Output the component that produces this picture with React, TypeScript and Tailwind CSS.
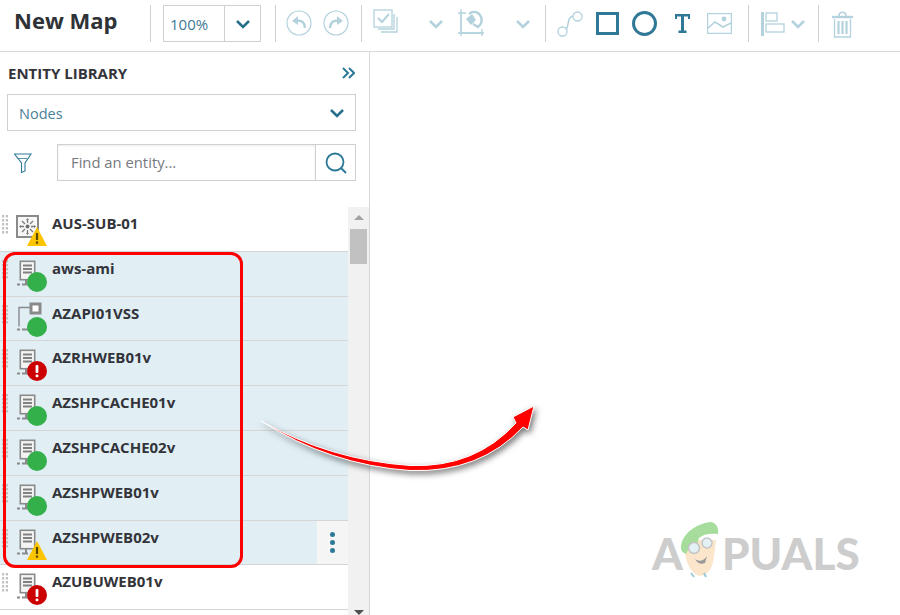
const LIGHT = "#b3d2dd";
const DARK = "#2c7a98";

function Chevron({ color = "#26708c", size = 16 }: { color?: string; size?: number }) {
  return (
    <svg width={size} height={size} viewBox="0 0 16 16" fill="none" stroke={color} strokeWidth="2.6">
      <path d="M2 5l6 6 6-6" />
    </svg>
  );
}

function Divider({ ml }: { ml: string }) {
  return <div className={`h-[37px] w-px shrink-0 bg-[#d0d0d0] ${ml}`} />;
}

function Toolbar() {
  return (
    <div className="flex h-[52px] shrink-0 items-start border-b border-[#d8d8d8] pt-[5px]">
      <div className="ml-[14px] w-[136px] shrink-0 text-[22px] leading-[30px] font-bold text-[#2f3237]">New Map</div>
      <Divider ml="" />
      <div className="ml-[12px] flex h-[37px] w-[98px] shrink-0 border border-[#d0d0d0]">
        <div className="flex w-[61px] items-center border-r border-[#d0d0d0] pl-[6px] pt-[2px] text-[15px] text-[#3f7a94]">100%</div>
        <div className="flex flex-1 items-center justify-center"><Chevron /></div>
      </div>
      <Divider ml="ml-[14px]" />
      {/* undo / redo */}
      <svg className="ml-[10px] mt-[5px] shrink-0" width="26" height="26" viewBox="0 0 26 26" fill="none" stroke={LIGHT}>
        <circle cx="13" cy="13" r="12" strokeWidth="1.2" />
        <path d="M19 18c0-5-3-8-8-7" strokeWidth="2.4" />
        <path d="M6 11l6-5v9z" fill={LIGHT} stroke="none" />
      </svg>
      <svg className="ml-[11px] mt-[5px] shrink-0" width="26" height="26" viewBox="0 0 26 26" fill="none" stroke={LIGHT}>
        <circle cx="13" cy="13" r="12" strokeWidth="1.2" />
        <path d="M7 18c0-5 3-8 8-7" strokeWidth="2.4" />
        <path d="M20 11l-6-5v9z" fill={LIGHT} stroke="none" />
      </svg>
      <Divider ml="ml-[12px]" />
      {/* select stack */}
      <svg className="ml-[11px] mt-[4px] shrink-0" width="25" height="27" viewBox="0 0 25 27" fill="none" stroke={LIGHT} strokeWidth="1.3">
        <rect x="1" y="1" width="18" height="17" />
        <path d="M21 5v15H5M24 8v15H8" />
        <path d="M5 9l4 4 7-8" strokeWidth="2" />
      </svg>
      <div className="ml-[30px] mt-[11px] shrink-0"><Chevron color={LIGHT} /></div>
      {/* snap */}
      <svg className="ml-[14px] mt-[4px] shrink-0" width="27" height="27" viewBox="0 0 27 27" fill="none" stroke={LIGHT} strokeWidth="1.3">
        <path d="M3 0v27M0 24h26M0 4h8M24 20v7" />
        <path d="M3 4v20h21" />
        <path d="M15 15l5 3c4-3 5-8 2-12-3-4-8-4-11-1" strokeWidth="2.4" />
        <path d="M8 10l6-5 4 6-5 5z" fill={LIGHT} stroke="none" />
      </svg>
      <div className="ml-[30px] mt-[11px] shrink-0"><Chevron color={LIGHT} /></div>
      <Divider ml="ml-[14px]" />
      {/* connector */}
      <svg className="ml-[11px] mt-[6px] shrink-0" width="26" height="26" viewBox="0 0 26 26" fill="none" stroke={LIGHT} strokeWidth="1.3">
        <circle cx="20.5" cy="5.5" r="4.5" />
        <circle cx="5.5" cy="20.5" r="4.5" />
        <path d="M16 5c-5 1-4 5-5 8s-1 6-2 6" strokeWidth="1.6" />
      </svg>
      {/* rectangle */}
      <div className="ml-[13px] mt-[7px] h-[23px] w-[23px] shrink-0 border-[3px] border-[#2f7896]" />
      {/* ellipse */}
      <div className="ml-[13px] mt-[6px] h-[25px] w-[25px] shrink-0 rounded-full border-[3px] border-[#2f7896]" />
      {/* text tool */}
      <svg className="ml-[18px] mt-[9px] shrink-0" width="15" height="19" viewBox="0 0 15 19" fill="#2f7896">
        <path d="M0 0h15v5h-2V2.500H9V16.500h2.500V19h-8v-2.500H6V2.500H2V5H0z" />
      </svg>
      {/* image */}
      <svg className="ml-[17px] mt-[8px] shrink-0" width="25" height="21" viewBox="0 0 25 21" fill="none" stroke={LIGHT} strokeWidth="1.3">
        <rect x="0.6" y="0.6" width="23.8" height="19.8" />
        <path d="M1 15l7-6 8 5 8-4" strokeWidth="1.6" />
        <circle cx="17" cy="6" r="2.4" fill={LIGHT} stroke="none" />
      </svg>
      <Divider ml="ml-[16px]" />
      {/* align */}
      <svg className="ml-[12px] mt-[7px] shrink-0" width="24" height="24" viewBox="0 0 24 24" fill="none" stroke={LIGHT} strokeWidth="1.3">
        <path d="M1.500 0v24" strokeWidth="3" />
        <rect x="5" y="1" width="11" height="8" />
        <rect x="5" y="12" width="18" height="8" />
      </svg>
      <div className="ml-[5px] mt-[11px] shrink-0"><Chevron color={LIGHT} /></div>
      <Divider ml="ml-[12px]" />
      {/* trash */}
      <svg className="ml-[13px] mt-[6px] shrink-0" width="21" height="27" viewBox="0 0 21 27" fill="none" stroke={LIGHT} strokeWidth="1.3">
        <path d="M0 6h21" strokeWidth="2.4" />
        <path d="M7 5c0-5 7-5 7 0" strokeWidth="1.6" />
        <path d="M2.500 8v18h16V8" />
        <path d="M6.500 10v13M10.500 10v13M14.500 10v13" strokeWidth="2.2" />
      </svg>
    </div>
  );
}

function Handle() {
  return (
    <svg className="ml-[2px] mt-[8px] shrink-0" width="6" height="19" viewBox="0 0 6 19" fill="#c2c2c2">
      {[0, 4, 8, 12, 16].map((y) => (
        <g key={y}>
          <rect x="0" y={y} width="2.200" height="2.500" />
          <rect x="3.800" y={y} width="2.200" height="2.500" />
        </g>
      ))}
    </svg>
  );
}

function NodeIcon({ kind, status }: { kind: "server" | "net" | "switch"; status: "up" | "down" | "warn" }) {
  return (
    <svg className="ml-[8px] mt-[4px] shrink-0" width="32" height="38" viewBox="0 0 32 38" fill="none">
      {kind === "server" && (
        <g>
          <rect x="4.300" y="5.300" width="14.400" height="18.400" fill="#f4f4f4" stroke="#8a8a8a" strokeWidth="1.600" />
          <path d="M7 9.500h9M7 13h9M7 16.500h9" stroke="#808080" strokeWidth="2" />
          <path d="M10 23v5" stroke="#8a8a8a" strokeWidth="2" />
          <path d="M1 28.500h3M6 28.500h6" stroke="#8a8a8a" strokeWidth="2" />
        </g>
      )}
      {kind === "net" && (
        <g>
          <rect x="15" y="3" width="9" height="9" fill="#fff" stroke="#8a8a8a" strokeWidth="3" />
          <path d="M15 6.500H3v19" stroke="#8a8a8a" strokeWidth="1.400" />
          <path d="M1 28.500h3M6 28.500h6" stroke="#8a8a8a" strokeWidth="2" />
        </g>
      )}
      {kind === "switch" && (
        <g>
          <rect x="1" y="5" width="21" height="21" fill="#f7f7f7" stroke="#8a8a8a" strokeWidth="2" />
          <circle cx="11.500" cy="15.500" r="2" fill="#6f6f6f" />
          <path d="M11.500 12V8M11.500 19v4M8 15.500H4M15 15.500h4M9 13l-3-3M14 13l3-3M9 18l-3 3M14 18l3 3" stroke="#7a7a7a" strokeWidth="1.300" />
          <path d="M10 9l1.500-2 1.500 2zM10 22l1.500 2 1.500-2zM5 14l-2 1.500 2 1.500zM18 14l2 1.500-2 1.500z" fill="#7a7a7a" />
        </g>
      )}
      {status === "up" && <circle cx="21" cy="26" r="10" fill="#33b04a" />}
      {status === "down" && (
        <g>
          <circle cx="21" cy="26" r="10" fill="#cc0000" />
          <rect x="19.600" y="20" width="2.800" height="8" rx="1" fill="#fff" />
          <rect x="19.600" y="29.500" width="2.800" height="2.800" rx="1" fill="#fff" />
        </g>
      )}
      {status === "warn" && (
        <g>
          <path d="M21 16l10 19H11z" fill="#fdc500" />
          <rect x="19.900" y="22" width="2.200" height="7" fill="#5a4700" />
          <rect x="19.900" y="30.500" width="2.200" height="2.200" fill="#5a4700" />
        </g>
      )}
    </svg>
  );
}

const rows: { name: string; kind: "server" | "net" | "switch"; status: "up" | "down" | "warn"; selected?: boolean; menu?: boolean }[] = [
  { name: "AUS-SUB-01", kind: "switch", status: "warn" },
  { name: "aws-ami", kind: "server", status: "up", selected: true },
  { name: "AZAPI01VSS", kind: "net", status: "up", selected: true },
  { name: "AZRHWEB01v", kind: "server", status: "down", selected: true },
  { name: "AZSHPCACHE01v", kind: "server", status: "up", selected: true },
  { name: "AZSHPCACHE02v", kind: "server", status: "up", selected: true },
  { name: "AZSHPWEB01v", kind: "server", status: "up", selected: true },
  { name: "AZSHPWEB02v", kind: "server", status: "warn", selected: true, menu: true },
  { name: "AZUBUWEB01v", kind: "server", status: "down" },
];

function EntityRow({ row }: { row: (typeof rows)[number] }) {
  return (
    <div className={`flex h-[44.8px] shrink-0 items-start overflow-hidden border-b border-[#d5d5d5] ${row.selected ? "bg-[#e1eff5]" : "bg-white"}`}>
      <Handle />
      <NodeIcon kind={row.kind} status={row.status} />
      <div className="ml-[4px] flex-1 pt-[5px] text-[15px] leading-[22px] font-bold text-[#33343a]">{row.name}</div>
      {row.menu && (
        <div className="flex h-full w-[31px] flex-col items-center justify-center gap-[3px] bg-[#f5f5f5]">
          <div className="h-[5px] w-[5px] rounded-full bg-[#2c7a98]" />
          <div className="h-[5px] w-[5px] rounded-full bg-[#2c7a98]" />
          <div className="h-[5px] w-[5px] rounded-full bg-[#2c7a98]" />
        </div>
      )}
    </div>
  );
}

function Sidebar() {
  return (
    <div className="flex w-[370px] shrink-0 flex-col border-r border-[#d8d8d8]">
      <div className="flex h-[42px] shrink-0 items-center justify-between pl-[8px] pr-[14px]">
        <div className="text-[15px] font-bold text-[#33343a]">ENTITY LIBRARY</div>
        <svg width="13" height="12" viewBox="0 0 13 12" fill="none" stroke={DARK} strokeWidth="2">
          <path d="M1 1l5 5-5 5M7 1l5 5-5 5" />
        </svg>
      </div>
      <div className="ml-[7px] flex h-[37px] w-[349px] shrink-0 items-center justify-between border border-[#d0d0d0] pl-[11px] pr-[10px] text-[14.5px] text-[#4a8099]">
        <span className="pt-[2px]">Nodes</span>
        <Chevron />
      </div>
      <div className="mt-[13px] flex h-[37px] shrink-0 items-center">
        <svg className="ml-[14px] shrink-0" width="18" height="20" viewBox="0 0 18 20" fill="none" stroke={DARK} strokeWidth="1.100">
          <path d="M0.500 1h16.500l-6 9v8l-3.500 1.500V10z" />
          <path d="M4 5.500h9" strokeWidth="0.800" />
        </svg>
        <div className="ml-[25px] flex h-[37px] w-[259px] shrink-0 items-center border border-[#d0d0d0] pl-[13px] text-[14.8px] text-[#777a80] shadow-[inset_0_1px_2px_rgba(0,0,0,0.08)]">
          Find an entity...
        </div>
        <div className="flex h-[37px] w-[40px] shrink-0 items-center justify-center border border-l-0 border-[#d0d0d0]">
          <svg width="22" height="22" viewBox="0 0 22 22" fill="none" stroke={DARK} strokeWidth="1.800">
            <circle cx="10" cy="10" r="8.500" />
            <path d="M16 16l5 5" strokeWidth="2" />
          </svg>
        </div>
      </div>
      <div className="mt-[26px] flex min-h-0 flex-1 overflow-hidden">
        <div className="flex w-[348px] shrink-0 flex-col">
          {rows.map((r) => (
            <EntityRow key={r.name} row={r} />
          ))}
        </div>
        <div className="flex w-[21px] shrink-0 flex-col items-center bg-[#f1f1f1] pt-[8px]">
          <div className="h-0 w-0 border-x-[5px] border-b-[5px] border-x-transparent border-b-[#a3a3a3]" />
          <div className="mt-[9px] h-[35px] w-[17px] shrink-0 bg-[#c1c1c1]" />
          <div className="mt-auto h-0 w-0 border-x-[5px] border-t-[5px] border-x-transparent border-t-[#505050]" />
        </div>
      </div>
    </div>
  );
}

function Watermark() {
  return (
    <div className="absolute left-[652px] top-[527px] flex h-[52px] items-center font-['Lato',sans-serif] text-[44px] font-black text-[#cdcdcd]">
      <span className="w-[28px]">A</span>
      <svg className="-mt-[6px] w-[42px] shrink-0" width="42" height="56" viewBox="0 0 42 56" fill="none">
        <path d="M5 26c-1 10 5 26 15 28 8 0 13-9 14-20l2-16L8 18z" fill="#fbe6cb" />
        <path d="M1 26C1 12 16 2 30 0c6 0 9 6 8 12-8-1-15 0-19 4l-3 9-6-1-4 8C3 31 1 29 1 26z" fill="#a6dc9c" />
        <circle cx="14" cy="26" r="5.500" fill="#e3f1f5" stroke="#c4c4c4" strokeWidth="1.500" />
        <circle cx="27" cy="21" r="5" fill="#e3f1f5" stroke="#c4c4c4" strokeWidth="1.500" />
        <path d="M15 37c4 3 9 2 12-3l-2 7c-4 2-8 0-10-4z" fill="#9a9a9a" />
        <path d="M11 51l3 4M24 51l2 4" stroke="#9cc9d6" strokeWidth="2" />
      </svg>
      <span>PUALS</span>
    </div>
  );
}

export default function App() {
  return (
    <div className="relative flex h-[615px] w-[900px] flex-col overflow-hidden bg-white font-['Open_Sans',sans-serif]">
      <Toolbar />
      <div className="flex min-h-0 flex-1">
        <Sidebar />
        <div className="flex-1 bg-white" />
      </div>
      <Watermark />

      {/* red selection outline */}
      <div className="pointer-events-none absolute left-[3px] top-[252px] h-[316px] w-[240px] rounded-[12px] border-[3px] border-[#ff0000]" />

      {/* drag arrow */}
      <svg className="pointer-events-none absolute left-0 top-0 drop-shadow-[2px_3px_3px_rgba(0,0,0,0.55)]" width="900" height="615" viewBox="0 0 900 615" fill="none">
        <path
          d="M261 421Q330 460 410 465.500Q475 468 516 423L513 417L534 406L528 430L523 427Q480 473 410 470.500Q330 465 261 421Z"
          fill="#ff0000"
          stroke="#fff"
          strokeWidth="1"
        />
      </svg>
    </div>
  );
}
